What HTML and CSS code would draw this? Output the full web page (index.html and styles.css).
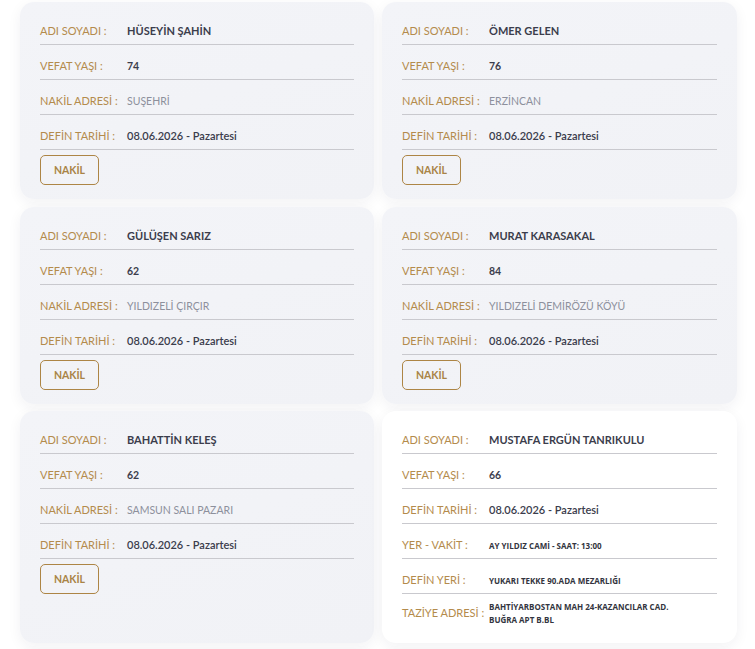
FILE: index.html
```html
<!DOCTYPE html>
<html lang="tr">
<head>
    <meta charset="UTF-8">
    <meta name="viewport" content="width=device-width, initial-scale=1.0">
    <title>Vefat İlanları</title>
    <link rel="stylesheet" href="styles.css">
</head>
<body>
    <div class="list">
        <div class="card">
            <div class="row"><span class="label">ADI SOYADI :</span><span class="value name">HÜSEYİN ŞAHİN</span></div>
            <div class="row"><span class="label">VEFAT YAŞI :</span><span class="value age">74</span></div>
            <div class="row"><span class="label">NAKİL ADRESİ :</span><span class="value addr">SUŞEHRİ</span></div>
            <div class="row"><span class="label">DEFİN TARİHİ :</span><span class="value date">08.06.2026 - Pazartesi</span></div>
            <button class="button">NAKİL</button>
        </div>
        <div class="card">
            <div class="row"><span class="label">ADI SOYADI :</span><span class="value name">ÖMER GELEN</span></div>
            <div class="row"><span class="label">VEFAT YAŞI :</span><span class="value age">76</span></div>
            <div class="row"><span class="label">NAKİL ADRESİ :</span><span class="value addr">ERZİNCAN</span></div>
            <div class="row"><span class="label">DEFİN TARİHİ :</span><span class="value date">08.06.2026 - Pazartesi</span></div>
            <button class="button">NAKİL</button>
        </div>
        <div class="card">
            <div class="row"><span class="label">ADI SOYADI :</span><span class="value name">GÜLÜŞEN SARIZ</span></div>
            <div class="row"><span class="label">VEFAT YAŞI :</span><span class="value age">62</span></div>
            <div class="row"><span class="label">NAKİL ADRESİ :</span><span class="value addr">YILDIZELİ ÇIRÇIR</span></div>
            <div class="row"><span class="label">DEFİN TARİHİ :</span><span class="value date">08.06.2026 - Pazartesi</span></div>
            <button class="button">NAKİL</button>
        </div>
        <div class="card">
            <div class="row"><span class="label">ADI SOYADI :</span><span class="value name">MURAT KARASAKAL</span></div>
            <div class="row"><span class="label">VEFAT YAŞI :</span><span class="value age">84</span></div>
            <div class="row"><span class="label">NAKİL ADRESİ :</span><span class="value addr">YILDIZELİ DEMİRÖZÜ KÖYÜ</span></div>
            <div class="row"><span class="label">DEFİN TARİHİ :</span><span class="value date">08.06.2026 - Pazartesi</span></div>
            <button class="button">NAKİL</button>
        </div>
        <div class="card">
            <div class="row"><span class="label">ADI SOYADI :</span><span class="value name">BAHATTİN KELEŞ</span></div>
            <div class="row"><span class="label">VEFAT YAŞI :</span><span class="value age">62</span></div>
            <div class="row"><span class="label">NAKİL ADRESİ :</span><span class="value addr">SAMSUN SALI PAZARI</span></div>
            <div class="row"><span class="label">DEFİN TARİHİ :</span><span class="value date">08.06.2026 - Pazartesi</span></div>
            <button class="button">NAKİL</button>
        </div>
        <div class="card local">
            <div class="row"><span class="label">ADI SOYADI :</span><span class="value name">MUSTAFA ERGÜN TANRIKULU</span></div>
            <div class="row"><span class="label">VEFAT YAŞI :</span><span class="value age">66</span></div>
            <div class="row"><span class="label">DEFİN TARİHİ :</span><span class="value date">08.06.2026 - Pazartesi</span></div>
            <div class="row"><span class="label">YER - VAKİT :</span><span class="value small">AY YILDIZ CAMİ - SAAT: 13:00</span></div>
            <div class="row"><span class="label">DEFİN YERİ :</span><span class="value small">YUKARI TEKKE 90.ADA MEZARLIĞI</span></div>
            <div class="row last"><span class="label">TAZİYE ADRESİ :</span><span class="value small">BAHTİYARBOSTAN MAH 24-KAZANCILAR CAD.<br>BUĞRA APT B.BL</span></div>
        </div>
        <div class="card next"></div>
        <div class="card next other"></div>
    </div>
</body>
</html>
```

FILE: styles.css
```css
body {
    margin: 0;
    background-color: #ffffff;
    font-family: Lato, "Noto Sans", sans-serif;
    font-size: 11px;
}
.list {
    display: grid;
    grid-template-columns: 354px 355px;
    column-gap: 8px;
    row-gap: 7.5px;
    padding: 2px 0 20px 20px;
}
.card {
    background: linear-gradient(160deg, #f3f4f8 0%, #f1f2f6 100%);
    border-radius: 14px;
    padding: 8px 20px 14px 20px;
    box-shadow: 0 4px 14px rgba(40, 40, 60, 0.06);
}
.card.local {
    background: #ffffff;
    padding-bottom: 12px;
}
.card.next {
    min-height: 160px;
}
.card.other {
    background: #efeff4;
}
.row {
    display: flex;
    align-items: center;
    padding: 13px 0 5px 0;
    line-height: 16px;
    border-bottom: 1px solid #c9c9ce;
}
.row.last {
    border-bottom: none;
    padding-top: 6px;
}
.label {
    flex: 0 0 87px;
    color: #b48b4c;
    font-size: 11px;
    white-space: nowrap;
}
.value {
    color: #3b3d4c;
}
.name {
    font-weight: 700;
    font-size: 11px;
}
.age {
    font-weight: 700;
    font-size: 10.5px;
}
.addr {
    color: #8d909c;
    font-size: 10.5px;
}
.date {
    font-weight: 600;
    font-size: 11px;
}
.small {
    font-family: "Open Sans", sans-serif;
    font-size: 8px;
    font-weight: 700;
    line-height: 13px;
    color: #333540;
}
.button {
    margin-top: 5px;
    width: 59px;
    height: 30px;
    background: transparent;
    border: 1px solid #ad8545;
    border-radius: 5px;
    color: #a98446;
    font-family: Lato, sans-serif;
    font-size: 10.5px;
    font-weight: 700;
    cursor: pointer;
}
```
